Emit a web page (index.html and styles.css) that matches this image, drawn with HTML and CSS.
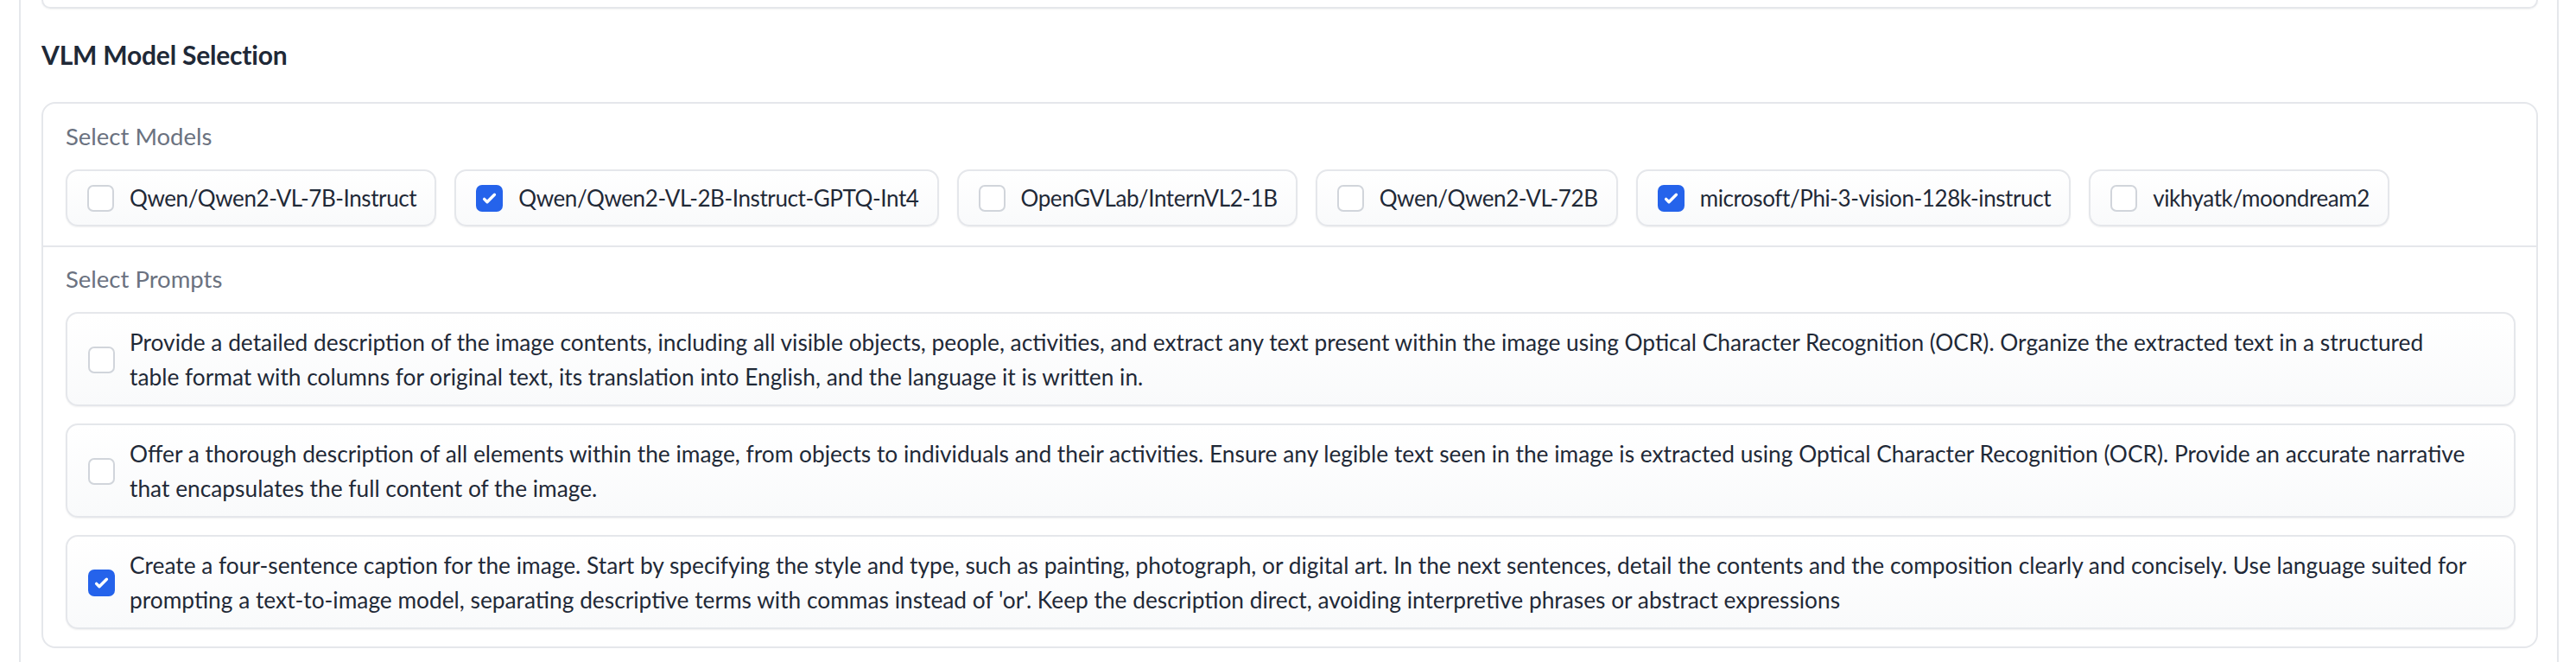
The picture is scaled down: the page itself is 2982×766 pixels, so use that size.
FILE: index.html
```html
<!DOCTYPE html>
<html lang="en">
<head>
  <meta charset="UTF-8" />
  <meta name="viewport" content="width=device-width, initial-scale=1.0" />
  <title>VLM Model Selection</title>
  <link rel="stylesheet" href="styles.css">
</head>
<body>
  <div class="panel">
    <div class="top-card"></div>

    <h3 class="section-title">VLM Model Selection</h3>

    <div class="selection-box">
      <div class="field">
        <span class="field-label">Select Models</span>
        <div class="chip-list">
          <label class="chip"><input type="checkbox"> <span>Qwen/Qwen2-VL-7B-Instruct</span></label>
          <label class="chip"><input type="checkbox" checked> <span>Qwen/Qwen2-VL-2B-Instruct-GPTQ-Int4</span></label>
          <label class="chip"><input type="checkbox"> <span>OpenGVLab/InternVL2-1B</span></label>
          <label class="chip"><input type="checkbox"> <span>Qwen/Qwen2-VL-72B</span></label>
          <label class="chip"><input type="checkbox" checked> <span>microsoft/Phi-3-vision-128k-instruct</span></label>
          <label class="chip"><input type="checkbox"> <span>vikhyatk/moondream2</span></label>
        </div>
      </div>

      <div class="field field-prompts">
        <span class="field-label">Select Prompts</span>
        <div class="prompt-list">
          <label class="chip prompt-card"><input type="checkbox"> <span>Provide a detailed description of the image contents, including all visible objects, people, activities, and extract any text present within the image using Optical Character Recognition (OCR). Organize the extracted text in a structured<br>table format with columns for original text, its translation into English, and the language it is written in.</span></label>
          <label class="chip prompt-card"><input type="checkbox"> <span>Offer a thorough description of all elements within the image, from objects to individuals and their activities. Ensure any legible text seen in the image is extracted using Optical Character Recognition (OCR). Provide an accurate narrative that encapsulates the full content of the image.</span></label>
          <label class="chip prompt-card"><input type="checkbox" checked> <span>Create a four-sentence caption for the image. Start by specifying the style and type, such as painting, photograph, or digital art. In the next sentences, detail the contents and the composition clearly and concisely. Use language suited for prompting a text-to-image model, separating descriptive terms with commas instead of 'or'. Keep the description direct, avoiding interpretive phrases or abstract expressions</span></label>
        </div>
      </div>
    </div>
  </div>
</body>
</html>
```

FILE: styles.css
```css
* {
  box-sizing: border-box;
}
body {
  margin: 0;
  background: #fff;
  font-family: "Lato", "Noto Sans", sans-serif;
  color: #1f2937;
  overflow: hidden;
}
.panel {
  margin-left: 22px;
  width: 2940px;
  min-height: 766px;
  padding: 0 22px 0 24px;
  border-left: 2px solid #e5e7eb;
  border-right: 2px solid #e5e7eb;
}
.top-card {
  height: 10px;
  border: 2px solid #e5e7eb;
  border-top: none;
  border-radius: 0 0 16px 16px;
  box-shadow: 0 1px 2px rgba(0, 0, 0, 0.05);
}
.section-title {
  margin: 33px 0 35px;
  font-size: 30px;
  line-height: 40px;
  font-weight: 700;
  letter-spacing: -0.2px;
  color: #1f2937;
}
.selection-box {
  border: 2px solid #e5e7eb;
  border-radius: 16px;
  background: #fff;
}
.field {
  padding: 20px 24px 22px 26px;
}
.field-prompts {
  border-top: 2px solid #e5e7eb;
  padding-top: 19px;
  padding-bottom: 20px;
}
.field-label {
  display: block;
  font-size: 27.5px;
  line-height: 36px;
  color: #6b7280;
  margin-bottom: 20px;
}
.chip-list {
  display: flex;
  flex-wrap: wrap;
  gap: 21px;
}
.chip {
  display: flex;
  align-items: center;
  gap: 18px;
  height: 66px;
  padding: 0 21px 0 23px;
  border: 2px solid #e5e7eb;
  border-radius: 14px;
  background: linear-gradient(to top, #f9fafb, #ffffff);
  box-shadow: 0 1px 2px rgba(0, 0, 0, 0.06);
  font-size: 26px;
  letter-spacing: -0.4px;
  color: #1f2937;
  cursor: pointer;
}
.chip input {
  appearance: none;
  -webkit-appearance: none;
  flex-shrink: 0;
  width: 31px;
  height: 31px;
  margin: 0;
  border: 2px solid #d1d5db;
  border-radius: 7px;
  background-color: #fff;
  background-size: 100% 100%;
  cursor: pointer;
}
.chip input:checked {
  border-color: #2563eb;
  background-color: #2563eb;
  background-image: url("data:image/svg+xml,%3csvg viewBox='0 0 16 16' fill='white' xmlns='http://www.w3.org/2000/svg'%3e%3cpath d='M12.207 4.793a1 1 0 010 1.414l-5 5a1 1 0 01-1.414 0l-2-2a1 1 0 011.414-1.414L6.5 9.086l4.293-4.293a1 1 0 011.414 0z'/%3e%3c/svg%3e");
}
.prompt-list {
  display: flex;
  flex-direction: column;
  gap: 20px;
}
.prompt-card {
  height: auto;
  gap: 17px;
  padding: 13px 18px 12px 24px;
  font-size: 26.3px;
  letter-spacing: 0;
  line-height: 40px;
}
```
